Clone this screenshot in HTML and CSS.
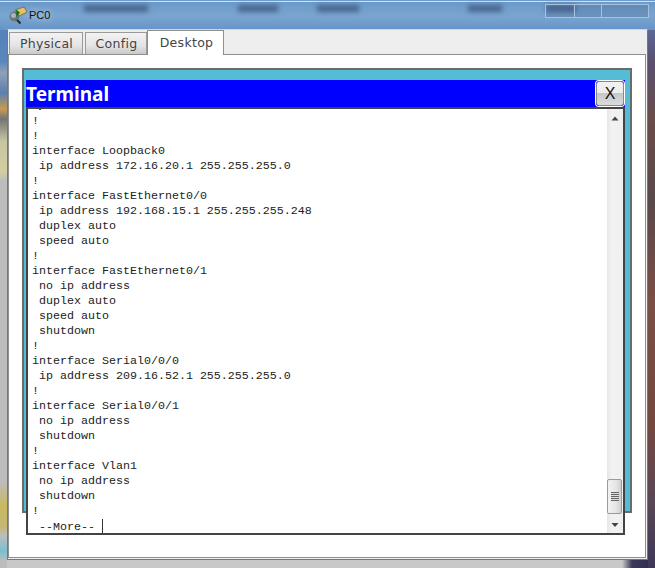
FILE: index.html
```html
<!DOCTYPE html>
<html lang="en">
<head>
<meta charset="utf-8">
<title>PC0</title>
<link rel="stylesheet" href="styles.css">
</head>
<body>
<div class="window">
  <div class="blur-text">
    <span class="b1"></span><span class="b2"></span><span class="b3"></span><span class="b4"></span><span class="b5"></span>
  </div>
  <header class="titlebar">
    <svg class="app-icon" width="20" height="20" viewBox="0 0 20 20">
      <circle cx="6.500" cy="11.500" r="5" fill="#66767c"/>
      <circle cx="5.500" cy="10.500" r="2.500" fill="#a9b5b8"/>
      <path d="M9 15l3.500 3.500" stroke="#1c2a22" stroke-width="1.800"/>
      <path d="M7 5l9-3 3 5-8 4z" fill="#e6c36a" stroke="#6e5a24" stroke-width=".7"/>
      <path d="M8 4.500l4 3-3.500 5z" fill="#16702a"/>
    </svg>
    <span class="title">PC0</span>
    <div class="capture"><i></i><i></i></div>
  </header>
  <main class="client">
    <nav class="tabs">
      <div class="tab">Physical</div>
      <div class="tab tab-config">Config</div>
      <div class="tab tab-active">Desktop</div>
    </nav>
    <section class="desktop">
      <div class="teal">
        <div class="bar">
          <h1 class="bar-title">Terminal</h1>
          <button class="close" type="button">X</button>
        </div>
        <div class="terminal">
          <div class="console">
            <div class="tick"></div>
            <pre class="output">!
!
interface Loopback0
 ip address 172.16.20.1 255.255.255.0
!
interface FastEthernet0/0
 ip address 192.168.15.1 255.255.255.248
 duplex auto
 speed auto
!
interface FastEthernet0/1
 no ip address
 duplex auto
 speed auto
 shutdown
!
interface Serial0/0/0
 ip address 209.16.52.1 255.255.255.0
!
interface Serial0/0/1
 no ip address
 shutdown
!
interface Vlan1
 no ip address
 shutdown
!
 --More-- <span class="caret"></span></pre>
          </div>
          <div class="scrollbar">
            <svg class="arrow" width="16" height="16" viewBox="0 0 16 16"><path d="M4.500 11.500l3.500-4 3.500 4z" fill="#444"/></svg>
            <div class="track"></div>
            <div class="thumb"><span class="grip"></span></div>
            <div class="gap"></div>
            <svg class="arrow" width="16" height="16" viewBox="0 0 16 16"><path d="M4.500 6l3.500 4 3.500-4z" fill="#444"/></svg>
          </div>
        </div>
      </div>
    </section>
  </main>
</div>
</body>
</html>
```
FILE: styles.css
```css
* { box-sizing: border-box; }
html, body { margin: 0; height: 100%; overflow: hidden; }
body { width: 655px; height: 568px; font-family: "Liberation Sans", sans-serif; }

.window {
  position: relative;
  width: 655px;
  height: 568px;
  padding: 0 7px 8px 7px;
  display: flex;
  flex-direction: column;
  overflow: hidden;
  border-top: 1px solid #6f9ccb;
  background-color: #c8c8c8;
  background-image:
    linear-gradient(180deg, #cfe0f2 0, #cfe0f2 1px, transparent 1px),
    linear-gradient(180deg, #6a98c8 0, #7aa5cf 15px, #6694c8 29px),
    linear-gradient(180deg, #4f7fb8 0, #5a86bb 60px, #8fa0b8 72px, #5b7fae 92px, #c89b50 108px, #747474 118px, #c7c4a0 140px, #d4cf9f 170px, #bdbdbd 180px, #bdbdbd 480px, #c9b860 505px, #c4b870 525px, #bdbdbd 535px, #78c0d0 550px, #bdbdbd 560px),
    linear-gradient(180deg, #5f7fb8 0, #5a5070 60px, #6a4c48 120px, #59484a 200px, #7a4f46 300px, #75483f 420px, #5a4656 500px, #3c3858 568px),
    linear-gradient(90deg, #c8c8c8 0, #c8c8c8 622px, #3c3858 632px, #2c2a50 655px);
  background-size: 100% 2px, 100% 29px, 7px 100%, 7px 100%, 100% 100%;
  background-position: 0 0, 0 0, 0 0, 100% 0, 0 0;
  background-repeat: no-repeat;
}
.blur-text { position: absolute; inset: 0; filter: blur(2.500px); pointer-events: none; }
.blur-text span { position: absolute; top: 4px; height: 7px; background: #3f5880; opacity: .8; }
.b1 { left: 84px; width: 64px; }
.b2 { left: 238px; width: 40px; }
.b3 { left: 317px; width: 42px; }
.b4 { left: 468px; width: 34px; }
.b5 { left: 546px; width: 30px; }

.titlebar {
  position: relative;
  height: 28px;
  flex: none;
  display: flex;
  align-items: center;
  padding: 0 0 0 1px;
}
.app-icon { flex: none; }
.title {
  margin-left: 1px;
  font-size: 11px;
  color: #111;
  text-shadow: 0 0 6px #cfe0f0;
}
.capture {
  position: absolute;
  top: 3px;
  right: -1px;
  width: 104px;
  height: 14px;
  border: 1px solid #a9c1dd;
  background: rgba(60,90,130,.25);
  display: flex;
}
.capture i { width: 29px; border-right: 1px solid #a9c1dd; }
.capture i + i { width: 27px; }

.client {
  flex: 1;
  display: flex;
  flex-direction: column;
  border: 1px solid #777;
  border-top-color: #cfd6dc;
  background: #eee;
  padding: 0 1px 1px 0;
  min-height: 0;
}
.tabs {
  flex: none;
  height: 24px;
  display: flex;
  align-items: flex-end;
  position: relative;
  z-index: 1;
}
.tab {
  height: 22px;
  width: 74px;
  margin-right: 2px;
  padding-left: 1px;
  line-height: 21px;
  text-align: center;
  color: #444;
  font-family: "DejaVu Sans", sans-serif;
  font-size: 12.500px;
  letter-spacing: .3px;
  background: linear-gradient(180deg, #f2f2f2 0, #e4e4e4 60%, #c9c9c9 100%);
  border: 1px solid #9a9a9a;
  border-bottom: 0;
}
.tabs .tab:first-child { margin-left: 1px; }
.tab-config { width: 62px; margin-right: 0; }
.tab-active {
  height: 25px;
  width: 77px;
  padding-left: 2px;
  line-height: 23px;
  background: #fff;
  border-color: #8f8f8f;
  margin-bottom: -1px;
}

.desktop {
  flex: 1;
  background: #fff;
  border: 1px solid #8f8f8f;
  padding: 13px 0 0 13px;
  min-height: 0;
}
.teal {
  height: 445px;
  width: 610px;
  background: #54bcd4;
  border: 2px solid #6b6b6b;
  padding: 10px 5px 0 2px;
}
.bar {
  height: 27px;
  display: flex;
  justify-content: space-between;
  background: #00f;
}
.bar-title {
  margin: 0;
  font: bold 19px/28px "Noto Sans", sans-serif;
  color: #fff;
}
.close {
  width: 28px;
  height: 25px;
  padding: 0;
  margin: 1px;
  border: 1px solid #888;
  border-radius: 3px;
  font: 16px/23px "Liberation Sans", sans-serif;
  color: #111;
  background: linear-gradient(180deg, #f2f2f2 0, #ececec 48%, #c6c6c6 48%, #dcdcdc 100%);
  box-shadow: 0 0 0 1px #fff;
}
.terminal {
  display: flex;
  height: 428px;
  background: #fff;
  border: 2px solid #444;
  overflow: hidden;
}
.console {
  flex: 1;
  padding-left: 4px;
}
.tick {
  width: 2px;
  height: 1px;
  margin: 0 0 4px 7px;
  background: #444;
}
.output {
  margin: 0;
  font: 11.670px/15px "Liberation Mono", "Courier New", monospace;
  color: #222;
}
.caret {
  display: inline-block;
  width: 1px;
  height: 14px;
  background: #333;
  vertical-align: -3px;
}
.scrollbar {
  flex: none;
  width: 16px;
  background: linear-gradient(90deg, #e6e6e6, #f2f2f2 30%, #f0f0f0);
  display: flex;
  flex-direction: column;
}
.arrow { flex: none; display: block; }
.track { flex: 1; }
.gap { flex: none; height: 3px; }
.thumb {
  flex: none;
  height: 35px;
  width: 15px;
  border: 1px solid #9a9a9a;
  border-radius: 2px;
  background: linear-gradient(90deg, #f2f2f2, #e6e6e6 60%, #cfcfcf);
  display: flex;
  align-items: center;
  justify-content: center;
}
.grip {
  display: block;
  width: 8px;
  height: 9px;
  background: repeating-linear-gradient(180deg, #666 0 1px, #ddd 1px 2px);
}
```
